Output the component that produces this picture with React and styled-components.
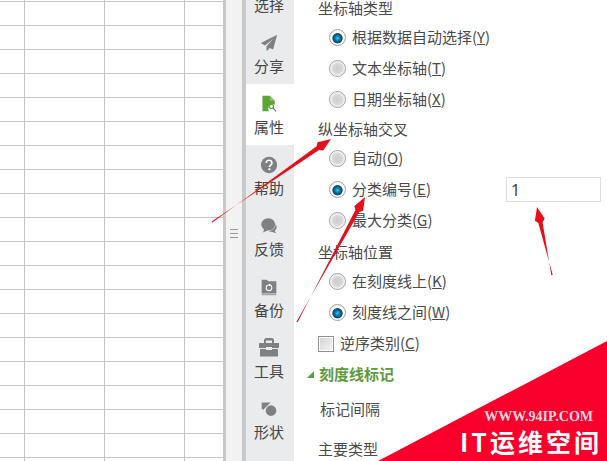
import React from "react";
import styled, { createGlobalStyle } from "styled-components";

const GlobalStyle = createGlobalStyle`
  html, body {
    margin: 0;
    padding: 0;
    background: #fff;
  }
  body {
    font-family: "Noto Sans CJK SC", "Liberation Sans", sans-serif;
    color: #444;
  }
`;

const ROWS = Array.from({ length: 21 });
const COLUMNS = [25, 80, 80, 38];

const arrowPoints = (x1, y1, x2, y2) => {
  const len = Math.hypot(x2 - x1, y2 - y1);
  const ux = (x2 - x1) / len;
  const uy = (y2 - y1) / len;
  const nx = -uy;
  const ny = ux;
  const bx = x2 - ux * 13;
  const by = y2 - uy * 13;
  const pt = (x, y) => `${x.toFixed(1)},${y.toFixed(1)}`;
  return [
    pt(x1 - nx * 0.7, y1 - ny * 0.7),
    pt(bx - ux * 3 + nx * 2.2, by - uy * 3 + ny * 2.2),
    pt(bx + nx * 5, by + ny * 5),
    pt(x2, y2),
    pt(bx - nx * 5, by - ny * 5),
    pt(bx - ux * 3 - nx * 2.2, by - uy * 3 - ny * 2.2),
    pt(x1 + nx * 0.7, y1 + ny * 0.7),
  ].join(" ");
};

const SMALL_BOX = "-2.500 -2.500 27 27";
const WIDE_BOX = "0 0 22 22";

const ICONS = {
  select: <path d="M7 2l10 9-5 1 3 6-2 1-3-6-3 3z" />,
  share: <path d="M21 1L1 11l5 3 10-8-8 9v6l4-4 4 2z" />,
  props: (
    <>
      <path d="M3 1h9l6 6v5l-3-1-4 2-1 4 1 3H3z" fill="#5ba532" />
      <path d="M12 1l6 6h-6z" fill="#8cc46a" />
      <circle cx="14" cy="14" r="2.500" fill="none" stroke="#5ba532" strokeWidth="1.400" />
      <path d="M16 16l4 4" stroke="#777" strokeWidth="1.500" />
    </>
  ),
  help: (
    <>
      <circle cx="11" cy="11" r="10" />
      <path d="M7.600 8.500c0-4.400 7-4.400 7 0 0 2.600-3 2.500-3 5" fill="none" stroke="#fff" strokeWidth="2" />
      <rect x="10.300" y="15" width="2.400" height="2.400" fill="#fff" />
    </>
  ),
  chat: (
    <>
      <ellipse cx="10" cy="9" rx="8.500" ry="7.500" />
      <path d="M5 14l-1 5 6-3z" />
      <path d="M19 9c2 2 2 6-1 8l2 3-6-2c-1 0-2 0-3-1 4 0 8-3 8-8z" />
    </>
  ),
  backup: (
    <>
      <path d="M2 2h6l2 2h10v15H2z" />
      <rect x="2" y="20" width="18" height="1" />
      <circle cx="11" cy="12" r="3.500" fill="none" stroke="#fff" strokeWidth="1.300" />
      <path d="M11 7l3 1.500-3 1.500z" fill="#fff" />
    </>
  ),
  tools: (
    <>
      <path d="M6 7V3.500C6 2 7 1 8 1h6c1 0 2 1 2 2.500V7h-2V3.500H8V7z" />
      <rect x="1" y="6" width="20" height="5" />
      <rect x="2" y="12" width="18" height="7.500" />
      <rect x="8" y="10" width="6" height="3" fill="#eaebed" />
    </>
  ),
  shape: (
    <>
      <path d="M2 3h11l-9 9-2-1z" />
      <circle cx="13.500" cy="13" r="6.500" />
    </>
  ),
};

const TABS = [
  { key: "select", label: "选择" },
  { key: "share", label: "分享" },
  { key: "props", label: "属性", active: true },
  { key: "help", label: "帮助" },
  { key: "chat", label: "反馈" },
  { key: "backup", label: "备份" },
  { key: "tools", label: "工具", wide: true },
  { key: "shape", label: "形状" },
];

function Radio({ checked, label, hotkey }) {
  return (
    <OptionRow>
      <RadioDot $checked={checked} />
      <OptionText>
        {label}(<u>{hotkey}</u>)
      </OptionText>
    </OptionRow>
  );
}

export default function App() {
  return (
    <Page>
      <GlobalStyle />
      <Sheet>
        {ROWS.map((_, r) => (
          <SheetRow key={r}>
            {COLUMNS.map((w, c) => (
              <SheetCell key={c} $width={w} />
            ))}
          </SheetRow>
        ))}
      </Sheet>
      <Splitter>
        <Grip />
      </Splitter>
      <TabColumn>
        {TABS.map((t) => (
          <Tab key={t.key} $active={t.active}>
            <TabIcon viewBox={t.wide ? WIDE_BOX : SMALL_BOX}>{ICONS[t.key]}</TabIcon>
            <TabLabel>{t.label}</TabLabel>
          </Tab>
        ))}
      </TabColumn>
      <Panel>
        <GroupTitle>坐标轴类型</GroupTitle>
        <Radio checked label="根据数据自动选择" hotkey="Y" />
        <Radio label="文本坐标轴" hotkey="T" />
        <Radio label="日期坐标轴" hotkey="X" />
        <GroupTitle>纵坐标轴交叉</GroupTitle>
        <Radio label="自动" hotkey="O" />
        <InputRow>
          <Radio checked label="分类编号" hotkey="E" />
          <NumberInput defaultValue="1" />
        </InputRow>
        <Radio label="最大分类" hotkey="G" />
        <GroupTitle $spaced>坐标轴位置</GroupTitle>
        <Radio label="在刻度线上" hotkey="K" />
        <Radio checked label="刻度线之间" hotkey="W" />
        <CheckRow>
          <CheckBox />
          <CheckText>
            逆序类别(<u>C</u>)
          </CheckText>
        </CheckRow>
        <SectionTitle>
          <Caret />
          刻度线标记
        </SectionTitle>
        <FieldLabel $inset>标记间隔</FieldLabel>
        <FieldLabel>主要类型</FieldLabel>
      </Panel>
      <Arrows viewBox="0 0 607 461">
        <polygon points={arrowPoints(212, 222, 331, 139)} />
        <polygon points={arrowPoints(297, 322, 365, 197)} />
        <polygon points={arrowPoints(552, 275, 537, 207)} />
      </Arrows>
      <Watermark>
        <WatermarkUrl>WWW.94IP.COM</WatermarkUrl>
        <WatermarkName>IT运维空间</WatermarkName>
      </Watermark>
    </Page>
  );
}

const Page = styled.div`
  position: relative;
  display: flex;
  width: 607px;
  height: 461px;
  overflow: hidden;
  background: #fff;
`;

const Sheet = styled.div`
  width: 223px;
  flex: none;
  margin-top: -22px;
`;

const SheetRow = styled.div`
  display: flex;
  height: 23px;
  border-bottom: 1px solid #c4c4c4;
`;

const SheetCell = styled.div`
  width: ${(p) => p.$width}px;
  box-sizing: border-box;
  border-right: 1px solid #c4c4c4;
  &:last-child {
    border-right: 0;
  }
`;

const Splitter = styled.div`
  flex: none;
  width: 16px;
  margin-right: 4px;
  background: #f2f2f3;
  border-left: 3px solid #c9c9c9;
  box-shadow: 4px 0 0 #c9c9c9;
  display: flex;
  align-items: center;
  justify-content: center;
`;

const Grip = styled.div`
  width: 8px;
  height: 7px;
  margin-top: 5px;
  border-top: 1px solid #999;
  border-bottom: 1px solid #999;
  background: linear-gradient(#999, #999) center / 100% 1px no-repeat;
`;

const TabColumn = styled.div`
  flex: none;
  width: 48px;
  margin-top: -38px;
  height: 499px;
  background: #eaebed;
`;

const Tab = styled.div`
  height: 61px;
  display: flex;
  flex-direction: column;
  align-items: center;
  padding: 9px 2px 0 0;
  box-sizing: border-box;
  background: ${(p) => (p.$active ? "#fff" : "transparent")};
`;

const TabIcon = styled.svg`
  width: 22px;
  height: 22px;
  fill: #808084;
`;

const TabLabel = styled.div`
  font-size: 15px;
  line-height: 24px;
  color: #444;
`;

const Panel = styled.div`
  flex: 1;
  margin-top: -6px;
  padding-left: 24px;
  font-size: 15px;
  color: #4a4a4a;
  min-width: 0;
`;

const GroupTitle = styled.div`
  height: 28px;
  line-height: 28px;
  margin-top: ${(p) => (p.$spaced ? "2px" : "0")};
`;

const OptionRow = styled.div`
  height: 31px;
  display: flex;
  align-items: center;
  padding-left: 11px;
  gap: 6px;
`;

const OptionText = styled.span`
  white-space: nowrap;
  line-height: 29px;
  margin-top: -2px;
`;

const RadioDot = styled.span`
  width: 17px;
  height: 17px;
  flex: none;
  box-sizing: border-box;
  border-radius: 50%;
  border: 1px solid #a0a0a0;
  background: ${(p) =>
    p.$checked
      ? "radial-gradient(circle at 50% 55%, #35c3e6 0, #0b6f97 26%, #0a4568 42%, #ffffff 50%, #dfe8ee 100%)"
      : "radial-gradient(circle at 50% 50%, #cdcdcd 0, #d8d8d8 45%, #f8f8f8 70%, #ececec 100%)"};
`;

const InputRow = styled.div`
  display: flex;
  justify-content: space-between;
  align-items: center;
  height: 31px;
  padding-right: 6px;
`;

const NumberInput = styled.input`
  width: 95px;
  height: 25px;
  box-sizing: border-box;
  border: 1px solid #dedede;
  padding: 0 4px;
  font-family: "Noto Sans", "Liberation Sans", sans-serif;
  font-size: 16px;
  color: #444;
  outline: none;
`;

const CheckRow = styled.div`
  height: 31px;
  display: flex;
  align-items: center;
  gap: 6px;
`;

const CheckText = styled.span`
  line-height: 29px;
  margin-top: -2px;
`;

const CheckBox = styled.span`
  width: 16px;
  height: 16px;
  box-sizing: border-box;
  border: 1px solid #8f8f8f;
  background: linear-gradient(135deg, #d4d4d4, #f4f4f4);
  box-shadow: inset 0 0 0 1px #fff;
`;

const SectionTitle = styled.div`
  position: relative;
  height: 30px;
  line-height: 30px;
  margin-left: 1px;
  font-weight: 700;
  color: #5f9a3c;
`;

const Caret = styled.span`
  position: absolute;
  left: -12px;
  top: 12px;
  width: 0;
  height: 0;
  border-left: 7px solid transparent;
  border-bottom: 7px solid #5f9a3c;
`;

const FieldLabel = styled.div`
  height: 36px;
  line-height: 34px;
  margin-top: ${(p) => (p.$inset ? "3px" : "4px")};
  margin-left: ${(p) => (p.$inset ? "2px" : "0")};
`;

const Arrows = styled.svg`
  position: absolute;
  left: 0;
  top: 0;
  width: 607px;
  height: 461px;
  fill: #e3111b;
  pointer-events: none;
`;

const Watermark = styled.div`
  position: absolute;
  left: 378px;
  top: 341px;
  width: 229px;
  height: 120px;
  background: #f8002b;
  clip-path: polygon(100% 0, 100% 100%, 0 100%);
  color: #fff;
  display: flex;
  flex-direction: column;
  align-items: flex-end;
  justify-content: flex-end;
  padding-right: 5px;
  box-sizing: border-box;
`;

const WatermarkUrl = styled.div`
  font-family: "Liberation Serif", serif;
  font-weight: 700;
  font-size: 14px;
  line-height: 14px;
  white-space: nowrap;
  color: #fbd9de;
  margin: 0 9px 3px 0;
`;

const WatermarkName = styled.div`
  font-weight: 700;
  font-size: 25px;
  line-height: 28px;
  letter-spacing: 3px;
  white-space: nowrap;
  margin-bottom: 6px;
`;
